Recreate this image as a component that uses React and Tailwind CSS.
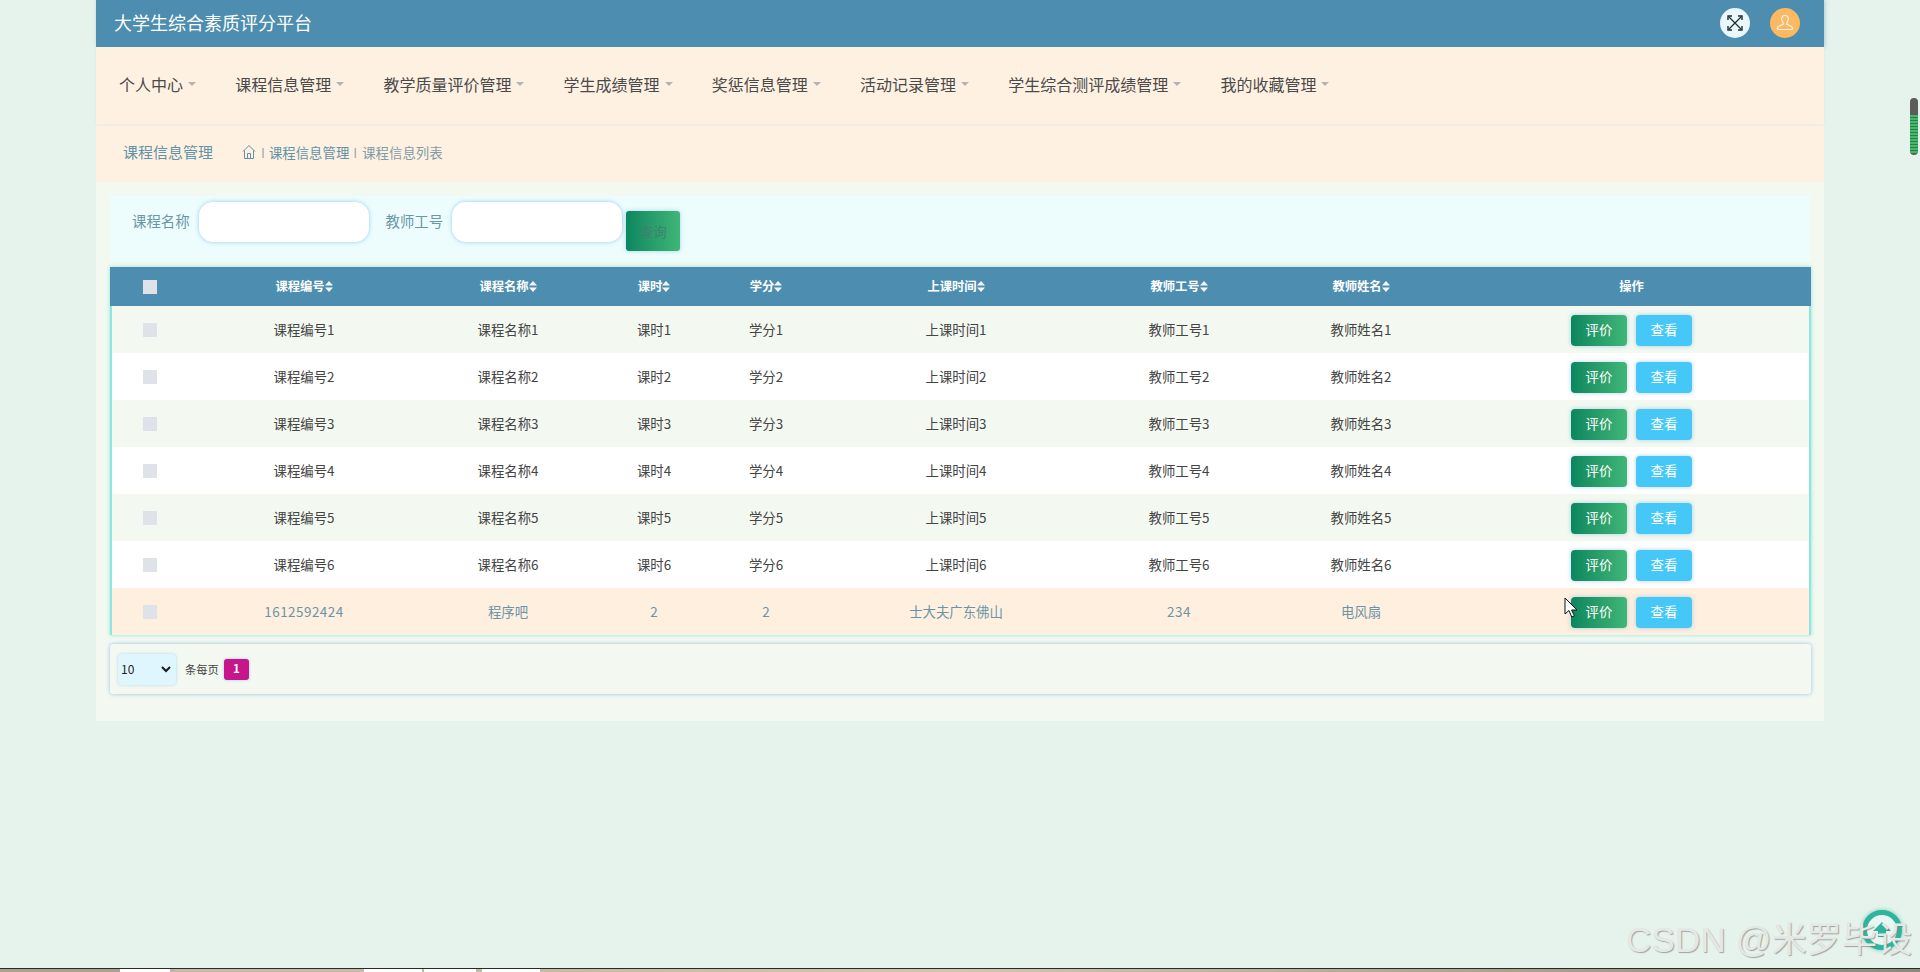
const navItems = ["个人中心","课程信息管理","教学质量评价管理","学生成绩管理","奖惩信息管理","活动记录管理","学生综合测评成绩管理","我的收藏管理"];
const heads = ["课程编号","课程名称","课时","学分","上课时间","教师工号","教师姓名"];
const rows = [1,2,3,4,5,6].map(n => [`课程编号${n}`,`课程名称${n}`,`课时${n}`,`学分${n}`,`上课时间${n}`,`教师工号${n}`,`教师姓名${n}`]);
const lastRow = ["1612592424","程序吧","2","2","士大夫广东佛山","234","电风扇"];
const cols = "grid grid-cols-[78px_228px_180px_112px_112px_268px_178px_186px_1fr] items-center";

function Sort() {
  return (
    <svg width="8" height="11" viewBox="0 0 8 11" className="shrink-0" fill="#f3f7fa">
      <path d="M4 0 8 4.6H0z" />
      <path d="M4 11 0 6.4h8z" />
    </svg>
  );
}

function Row({ cells, bg, text }) {
  return (
    <div className={`${cols} h-[47px] ${bg} ${text} text-[13.4px]`}>
      <div className="flex justify-center pr-[2px]"><div className="w-[14px] h-[14px] bg-[#dfe2e8]" /></div>
      {cells.map((c, i) => (
        <div key={i} className={/^\d{3,}$/.test(c) ? "text-center tracking-[0.5px] pb-[1px]" : "text-center pb-[1px]"}>{c}</div>
      ))}
      <div className="flex gap-[9px] pl-[117px] pt-[1px]">
        <button className="w-[56px] h-[31px] pb-[2px] rounded-[4px] bg-gradient-to-r from-[#08875f] to-[#3fb677] text-white text-[13.4px] shadow-[0_0_4px_rgba(90,170,220,0.5)]">评价</button>
        <button className="w-[56px] h-[31px] pb-[2px] rounded-[4px] bg-[#45c8f8] text-white text-[13.4px] shadow-[0_0_4px_rgba(90,170,220,0.5)]">查看</button>
      </div>
    </div>
  );
}

export default function App() {
  return (
    <div className="relative h-[972px] overflow-hidden flex flex-col bg-[#e6f3ec] font-['Noto_Sans_CJK_SC','Noto_Sans',sans-serif]">
      <div className="flex-1 min-h-0">
        <div className="ml-[96px] w-[1728px] h-[721px] bg-[#f3f9f1]">
          <header className="h-[47px] bg-[#4d8db0] flex items-center pl-[18px] pr-[24px] text-white text-[18px] shadow-[1px_0_4px_rgba(77,141,176,0.4)]">
            <span className="flex-1 pb-[3px]">大学生综合素质评分平台</span>
            <div className="w-[30px] h-[30px] rounded-full bg-[#e8f8fc] flex items-center justify-center -mt-[2px]">
              <svg width="16" height="16" viewBox="0 0 16 16" fill="none" stroke="#1f2a33" strokeWidth="1.2">
                <path d="M2 2l12 12M14 2 2 14" />
                <path d="M1 5V1h4M11 1h4v4M15 11v4h-4M5 15H1v-4" strokeWidth="1.4" />
              </svg>
            </div>
            <div className="w-[30px] h-[30px] rounded-full bg-[#fdb962] flex items-center justify-center ml-[20px] -mt-[2px]">
              <svg width="18" height="18" viewBox="0 0 18 18" fill="none" stroke="#fff8ee" strokeWidth="1.2">
                <path d="M9 1.5c-2.2 0-3.3 1.6-3.3 3.6 0 1.6.7 3 1.5 3.8v1.3c-1.4.9-5 1.7-5.7 3.6-.3.9.2 1.7 1 1.7h13c.8 0 1.3-.8 1-1.7-.7-1.9-4.3-2.7-5.7-3.6V8.9c.8-.8 1.5-2.2 1.5-3.8 0-2-1.1-3.6-3.3-3.6z" />
              </svg>
            </div>
          </header>

          <nav className="h-[77px] pb-[3px] bg-[#fff1e1] flex items-center gap-[39.2px] pl-[23px] text-[16px] text-[#4a4a4a] shadow-[0_1px_2px_rgba(0,0,0,0.06)] relative">
            {navItems.map(t => (
              <div key={t} className="flex items-center gap-[5px]">
                <span>{t}</span>
                <span className="w-0 h-0 border-x-[4.5px] border-x-transparent border-t-[4.5px] border-t-[#b3b3b3]" />
              </div>
            ))}
          </nav>

          <div className="h-[57px] pb-[2px] mt-[1px] bg-[#fff1e1] flex items-center pl-[27px] text-[#5f93a8]">
            <span className="text-[15px]">课程信息管理</span>
            <svg width="14" height="16" viewBox="0 0 14 16" fill="none" stroke="#5f93a8" strokeWidth="1" className="ml-[29px] -mt-[2px]">
              <path d="M1 7.5 7 1.5l6 6M2.5 6.5v8h9v-8M5.5 14.5v-5h3v5" />
            </svg>
            <span className="ml-[5px] text-[13.4px] text-[#9aa9ae]">I</span>
            <span className="ml-[4px] text-[13.4px]">课程信息管理</span>
            <span className="ml-[4px] text-[13.4px] text-[#9aa9ae]">I</span>
            <span className="ml-[5px] text-[13.4px] text-[#7f9ca8]">课程信息列表</span>
          </div>

          <div className="mt-[14px] ml-[14px] w-[1700px] h-[66px] bg-[#edfdfd] flex pl-[22px]">
            <span className="mt-[14px] text-[14.4px] text-[#6a97a6]">课程名称</span>
            <div className="ml-[9px] mt-[6px] w-[170px] h-[40px] rounded-[14px] bg-white shadow-[0_0_4px_rgba(110,180,240,0.7)]" />
            <span className="ml-[17px] mt-[14px] text-[14.4px] text-[#6a97a6]">教师工号</span>
            <div className="ml-[9px] mt-[6px] w-[170px] h-[40px] rounded-[14px] bg-white shadow-[0_0_4px_rgba(110,180,240,0.7)]" />
            <button className="ml-[4px] mt-[15px] w-[54px] h-[40px] rounded-[3px] bg-gradient-to-r from-[#08875f] to-[#3fb677] text-[#3f8072] text-[13.4px] shadow-[0_0_4px_rgba(90,170,220,0.5)]">查询</button>
          </div>

          <div className="mt-[5px] ml-[14px] w-[1701px] h-[368px] bg-white border-x-2 border-b-2 border-[#8fe6de] shadow-[0_0_4px_rgba(90,220,210,0.7)]">
            <div className={`${cols} h-[39px] bg-[#4d8db0] text-white text-[12.3px] font-bold -mx-[2px] pl-[2px]`}>
              <div className="flex justify-center pr-[2px]"><div className="w-[14px] h-[14px] bg-[#dfe2e8]" /></div>
              {heads.map(h => (
                <div key={h} className="flex items-center justify-center">
                  <span>{h}</span><Sort />
                </div>
              ))}
              <div className="text-center pr-[2px]">操作</div>
            </div>
            {rows.map((r, i) => (
              <Row key={i} cells={r} bg={i % 2 === 0 ? "bg-[#f3f9f1]" : "bg-white"} text="text-[#444444]" />
            ))}
            <Row cells={lastRow} bg="bg-[#feefdf]" text="text-[#6a95a8]" />
          </div>

          <div className="mt-[9px] ml-[14px] w-[1701px] h-[50px] rounded-[3px] bg-[#f3f9f1] flex items-center pl-[8px] shadow-[0_0_4px_rgba(100,160,230,0.65)]">
            <div className="w-[58px] h-[31px] rounded-[4px] bg-[#e0f6fe] flex items-center justify-between pl-[3px] pr-[5px] text-[12px] text-[#222] shadow-[0_0_3px_rgba(100,180,240,0.5)]">
              <span>10</span>
              <svg width="10" height="7" viewBox="0 0 10 7" fill="none" stroke="#1a1a1a" strokeWidth="2"><path d="M1 1l4 4 4-4" /></svg>
            </div>
            <span className="ml-[9px] text-[11.3px] text-[#444]">条每页</span>
            <div className="ml-[5px] w-[25px] h-[21px] rounded-[3px] bg-[#c7158a] text-white text-[11.5px] font-bold flex items-center justify-center shadow-[0_0_3px_rgba(100,160,230,0.6)]">1</div>
          </div>
        </div>
      </div>

      <div className="h-[4px] shrink-0 border-t border-[#2b2b25] flex bg-gradient-to-r from-[#b5ae98] via-[#cdc7b2] to-[#8c8a78]">
        <div className="w-[120px] bg-[#a8a48f]" />
        <div className="w-[50px] bg-white" />
        <div className="w-[4px]" />
        <div className="w-[190px] bg-[#c2bca8]" />
        <div className="w-[58px] bg-white" />
        <div className="w-[2px]" />
        <div className="w-[52px] bg-white" />
        <div className="w-[6px]" />
        <div className="w-[58px] bg-white" />
      </div>

      <div className="absolute left-[1910px] top-[98px] w-[8px] h-[57px] rounded-[4px] bg-[#5c5c5c] overflow-hidden flex items-end pb-[2px]">
        <div className="w-full h-[38px] bg-[repeating-linear-gradient(to_bottom,#43b86a_0,#43b86a_2px,#2f7f4c_2px,#2f7f4c_3px)]" />
      </div>

      <svg className="absolute left-[1564px] top-[597px]" width="14" height="22" viewBox="0 0 14 22" fill="#fff" stroke="#111" strokeWidth="1">
        <path d="M1 1v16l4-3.5 2.8 6.5 2.6-1.2L7.6 13H13z" />
      </svg>

      <div className="absolute left-[1862px] top-[910px] w-[40px] h-[40px] rounded-full bg-[#e9f6f2] border-[5px] border-[#2fb59b] shadow-[0_0_4px_rgba(47,181,155,0.7)] flex items-center justify-center">
        <svg width="20" height="20" viewBox="0 0 20 20" fill="#2fb59b"><path d="M10 2 19 11h-5v3H6v-3H1z" /><path d="M6 15.5h8V17H6z" /></svg>
      </div>

      <div className="absolute left-[1626px] top-[915px] text-[35px] leading-[50px] tracking-[0.2px] text-[#e4e8e6] whitespace-nowrap font-['Liberation_Sans','Noto_Sans_CJK_SC',sans-serif] [text-shadow:1px_1px_1px_rgba(120,120,120,0.65)]">CSDN @米罗毕设</div>
    </div>
  );
}
